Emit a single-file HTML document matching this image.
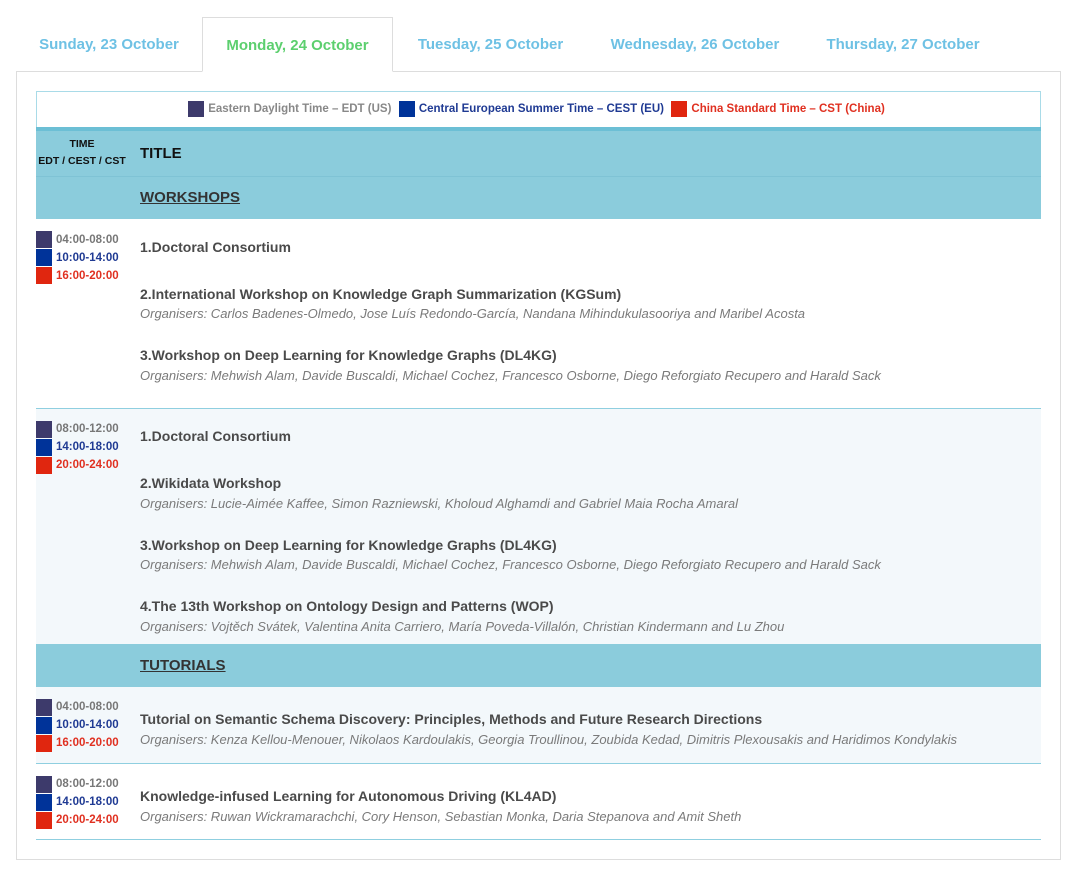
<!DOCTYPE html>
<html><head><meta charset="utf-8"><style>
*{margin:0;padding:0;box-sizing:border-box}
body{width:1080px;height:874px;background:#fff;font-family:"Liberation Sans",Arial,sans-serif;position:relative;overflow:hidden}
.a{position:absolute;white-space:nowrap}
.tab{position:absolute;top:17px;height:55px;font-size:15px;font-weight:bold;color:#6ec1e4;line-height:56px;text-align:center}
.t{position:absolute;left:140px;font-size:14px;font-weight:bold;color:#4a4a4a;line-height:16px;white-space:nowrap}
.o{position:absolute;left:140px;font-size:13px;font-style:italic;color:#7a7a7a;line-height:14px;white-space:nowrap}
.sq{position:absolute;left:36px;width:16px;height:17px}
.tm{position:absolute;left:56px;font-size:11.5px;font-weight:bold;line-height:14px}
.line{position:absolute;left:36px;width:1005px;height:1px;background:#8fcfe0}
</style></head><body>
<div class="a" style="left:16px;top:71px;width:1045px;height:789px;border:1px solid #ddd"></div>
<div class="tab" style="left:16px;width:186px">Sunday, 23 October</div>
<div class="tab" style="left:202px;width:191px;border:1px solid #ddd;border-bottom:1px solid #fff;background:#fff;color:#5ccf6e">Monday, 24 October</div>
<div class="tab" style="left:393px;width:195px">Tuesday, 25 October</div>
<div class="tab" style="left:588px;width:214px">Wednesday, 26 October</div>
<div class="tab" style="left:802px;width:202px">Thursday, 27 October</div>

<div class="a" style="left:36px;top:91px;width:1005px;height:37px;border:1px solid #a9dbe8;border-bottom:none"></div>
<div class="a" style="left:188px;top:101px;font-size:11.5px;font-weight:bold;line-height:16px">
<span style="display:inline-block;width:16px;height:16px;background:#3d3a6b;vertical-align:top"></span>
<span style="color:#888;margin-left:1px">Eastern Daylight Time – EDT (US)</span>
<span style="display:inline-block;width:16px;height:16px;background:#003399;vertical-align:top;margin-left:4px"></span>
<span style="color:#1f3a93;margin-left:1px">Central European Summer Time – CEST (EU)</span>
<span style="display:inline-block;width:16px;height:16px;background:#e0260f;vertical-align:top;margin-left:4px"></span>
<span style="color:#e03020;margin-left:1px">China Standard Time – CST (China)</span>
</div>

<div class="a" style="left:36px;top:127px;width:1005px;height:92px;background:#8bccdc"></div>
<div class="a" style="left:36px;top:127px;width:1005px;height:4px;background:#6cbfd5"></div>
<div class="a" style="left:36px;top:176px;width:1005px;height:1px;background:#7fc3d5"></div>
<div class="a" style="left:36px;top:136px;width:92px;text-align:center;font-size:10.5px;font-weight:bold;color:#111;line-height:17px">TIME<br>EDT / CEST / CST</div>
<div class="a" style="left:140px;top:145px;font-size:15px;font-weight:bold;color:#111">TITLE</div>
<div class="a" style="left:140px;top:189px;font-size:15px;font-weight:bold;color:#333;text-decoration:underline">WORKSHOPS</div>

<!-- row1 -->
<div class="sq" style="top:231px;background:#3d3a6b"></div><div class="sq" style="top:249px;background:#003399"></div><div class="sq" style="top:267px;background:#e0260f"></div>
<div class="tm" style="top:233px;color:#777">04:00-08:00</div><div class="tm" style="top:251px;color:#1f3a93">10:00-14:00</div><div class="tm" style="top:269px;color:#e03020">16:00-20:00</div>
<div class="t" style="top:239px">1.Doctoral Consortium</div>
<div class="t" style="top:286px">2.International Workshop on Knowledge Graph Summarization (KGSum)</div>
<div class="o" style="top:307px">Organisers: Carlos Badenes-Olmedo, Jose Luís Redondo-García, Nandana Mihindukulasooriya and Maribel Acosta</div>
<div class="t" style="top:347px">3.Workshop on Deep Learning for Knowledge Graphs (DL4KG)</div>
<div class="o" style="top:369px">Organisers: Mehwish Alam, Davide Buscaldi, Michael Cochez, Francesco Osborne, Diego Reforgiato Recupero and Harald Sack</div>
<div class="line" style="top:408px"></div>

<!-- row2 -->
<div class="a" style="left:36px;top:409px;width:1005px;height:235px;background:#f3f8fb"></div>
<div class="sq" style="top:421px;background:#3d3a6b"></div><div class="sq" style="top:439px;background:#003399"></div><div class="sq" style="top:457px;background:#e0260f"></div>
<div class="tm" style="top:422px;color:#777">08:00-12:00</div><div class="tm" style="top:440px;color:#1f3a93">14:00-18:00</div><div class="tm" style="top:458px;color:#e03020">20:00-24:00</div>
<div class="t" style="top:428px">1.Doctoral Consortium</div>
<div class="t" style="top:475px">2.Wikidata Workshop</div>
<div class="o" style="top:497px">Organisers: Lucie-Aimée Kaffee, Simon Razniewski, Kholoud Alghamdi and Gabriel Maia Rocha Amaral</div>
<div class="t" style="top:537px">3.Workshop on Deep Learning for Knowledge Graphs (DL4KG)</div>
<div class="o" style="top:558px">Organisers: Mehwish Alam, Davide Buscaldi, Michael Cochez, Francesco Osborne, Diego Reforgiato Recupero and Harald Sack</div>
<div class="t" style="top:598px">4.The 13th Workshop on Ontology Design and Patterns (WOP)</div>
<div class="o" style="top:620px">Organisers: Vojtěch Svátek, Valentina Anita Carriero, María Poveda-Villalón, Christian Kindermann and Lu Zhou</div>

<div class="a" style="left:36px;top:644px;width:1005px;height:43px;background:#8bccdc"></div>
<div class="a" style="left:140px;top:657px;font-size:15px;font-weight:bold;color:#333;text-decoration:underline">TUTORIALS</div>

<!-- row3 -->
<div class="a" style="left:36px;top:687px;width:1005px;height:76px;background:#f3f8fb"></div>
<div class="sq" style="top:699px;background:#3d3a6b"></div><div class="sq" style="top:717px;background:#003399"></div><div class="sq" style="top:735px;background:#e0260f"></div>
<div class="tm" style="top:700px;color:#777">04:00-08:00</div><div class="tm" style="top:718px;color:#1f3a93">10:00-14:00</div><div class="tm" style="top:736px;color:#e03020">16:00-20:00</div>
<div class="t" style="top:711px">Tutorial on Semantic Schema Discovery: Principles, Methods and Future Research Directions</div>
<div class="o" style="top:733px">Organisers: Kenza Kellou-Menouer, Nikolaos Kardoulakis, Georgia Troullinou, Zoubida Kedad, Dimitris Plexousakis and Haridimos Kondylakis</div>
<div class="line" style="top:763px"></div>

<!-- row4 -->
<div class="sq" style="top:776px;background:#3d3a6b"></div><div class="sq" style="top:794px;background:#003399"></div><div class="sq" style="top:812px;background:#e0260f"></div>
<div class="tm" style="top:777px;color:#777">08:00-12:00</div><div class="tm" style="top:795px;color:#1f3a93">14:00-18:00</div><div class="tm" style="top:813px;color:#e03020">20:00-24:00</div>
<div class="t" style="top:788px">Knowledge-infused Learning for Autonomous Driving (KL4AD)</div>
<div class="o" style="top:810px">Organisers: Ruwan Wickramarachchi, Cory Henson, Sebastian Monka, Daria Stepanova and Amit Sheth</div>
<div class="line" style="top:839px"></div>
</body></html>
